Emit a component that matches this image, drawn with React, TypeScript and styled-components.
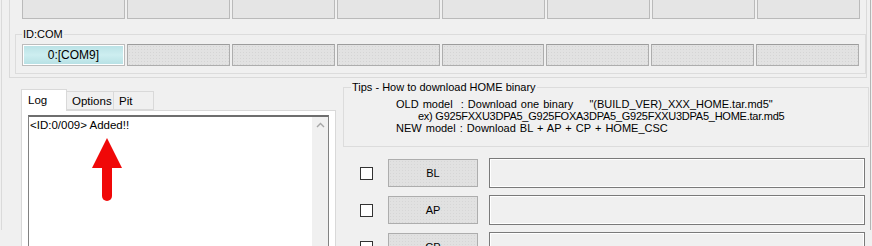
import styled, { createGlobalStyle } from 'styled-components';

const GlobalStyle = createGlobalStyle`
  html, body {
    margin: 0;
    padding: 0;
    background: #f0f0f0;
  }
  * {
    box-sizing: border-box;
  }
`;

const Screen = styled.div`
  position: relative;
  width: 872px;
  height: 246px;
  overflow: hidden;
  background: #f0f0f0;
  font-family: 'Liberation Sans', Arial, sans-serif;
  font-size: 11px;
  color: #000;
`;

const Frame = styled.div`
  margin-left: 1px;
  width: 870px;
  height: 246px;
  border-left: 1px solid #dadada;
  border-right: 1px solid #b4b4b4;
`;

const TopPanel = styled.div`
  margin: -16px 0 0 7px;
  width: 858px;
  border: 1px solid #dadada;
  padding-top: 11px;
`;

const ButtonRow = styled.div<{ $left: number }>`
  display: flex;
  gap: 2px;
  margin-left: ${(p) => p.$left}px;
`;

const SlotButton = styled.div`
  width: 103px;
  height: 23px;
  background: #e5e5e5;
  border: 1px solid #bababa;
`;

const Group = styled.fieldset`
  margin: 9px 0 3px 5px;
  padding: 0 6px 7px 6px;
  border: 1px solid #dcdcdc;
  min-width: 0;
`;

const Legend = styled.legend`
  padding: 0 1px;
  margin-left: 0;
  line-height: 13px;
  font-size: 11px;
`;

const ComButton = styled.div<{ $active?: boolean }>`
  width: 103px;
  height: 22px;
  display: flex;
  align-items: center;
  justify-content: center;
  font-size: 12px;
  border: 1px solid ${(p) => (p.$active ? '#bcbcbc' : '#adadad')};
  border-top-color: ${(p) => (p.$active ? '#bcbcbc' : '#9c9c9c')};
  background-color: ${(p) => (p.$active ? '#bce3e7' : '#e2e2e2')};
  background-image: ${(p) =>
    p.$active
      ? 'linear-gradient(#b9e1e5, #cdeef0 50%, #b6e0e4)'
      : 'radial-gradient(#d5d5d5 0.6px, transparent 0.8px)'};
  background-size: ${(p) => (p.$active ? 'auto' : '3px 3px')};
  box-shadow: ${(p) => (p.$active ? 'inset 0 0 0 1px #ffffff' : 'none')};
`;

const Bottom = styled.div`
  display: flex;
  align-items: flex-start;
  margin-top: 3px;
`;

const TabControl = styled.div`
  margin: 7px 0 0 19px;
  width: 315px;
`;

const TabStrip = styled.div`
  display: flex;
  align-items: flex-end;
  height: 22px;
  position: relative;
  z-index: 1;
`;

const Tab = styled.div<{ $selected?: boolean; $width: number }>`
  width: ${(p) => p.$width}px;
  height: ${(p) => (p.$selected ? 22 : 19)}px;
  margin-bottom: ${(p) => (p.$selected ? -1 : 0)}px;
  margin-left: -1px;
  &:first-child {
    margin-left: 0;
  }
  padding: ${(p) => (p.$selected ? '3px 0 0 6px' : '2px 0 0 5px')};
  background: ${(p) => (p.$selected ? '#ffffff' : '#f0f0f0')};
  border: 1px solid #d9d9d9;
  border-bottom: ${(p) => (p.$selected ? 'none' : '1px solid #d9d9d9')};
  font-size: 11.5px;
  line-height: 14px;
`;

const TabPage = styled.div`
  background: #ffffff;
  border: 1px solid #d9d9d9;
  height: 150px;
  padding: 4px 6px 0 6px;
`;

const LogBox = styled.div`
  display: flex;
  height: 140px;
  border: 1px solid #828282;
  border-top: 2px solid #6e6e6e;
  background: #ffffff;
`;

const LogText = styled.div`
  flex: 1;
  padding: 1px 0 0 1px;
  font-size: 11.5px;
  line-height: 15px;
`;

const ScrollBar = styled.div`
  width: 16px;
  background: #f0f0f0;
  display: flex;
  justify-content: center;
  padding-top: 5px;
`;

const RightColumn = styled.div`
  margin-left: 7px;
  width: 526px;
`;

const TipsGroup = styled.fieldset`
  margin: 0;
  padding: 0 7px 8px 7px;
  border: 1px solid #dcdcdc;
  height: 66px;
  min-width: 0;
`;

const TipLine = styled.div<{ $indent: number; $tight?: boolean }>`
  padding-left: ${(p) => p.$indent}px;
  line-height: 12px;
  white-space: pre;
  letter-spacing: ${(p) => (p.$tight ? '-0.25px' : '0')};
  word-spacing: ${(p) => (p.$tight ? '0' : '1px')};
`;

const TipsBody = styled.div`
  padding-top: 4px;
`;

const FileRows = styled.div`
  display: flex;
  flex-direction: column;
  gap: 7px;
  margin-top: 11px;
`;

const FileRow = styled.div`
  display: flex;
  align-items: center;
  height: 30px;
  padding-left: 17px;
`;

const CheckBox = styled.div`
  width: 13px;
  height: 13px;
  background: #ffffff;
  border: 1px solid #333333;
`;

const FileButton = styled.div`
  margin-left: 15px;
  width: 90px;
  height: 28px;
  display: flex;
  align-items: center;
  justify-content: center;
  border: 1px solid #adadad;
  background-color: #e1e1e1;
  background-image: radial-gradient(#d6d6d6 0.6px, transparent 0.8px);
  background-size: 3px 3px;
  font-size: 11px;
`;

const PathField = styled.div`
  margin-left: 11px;
  width: 376px;
  height: 30px;
  border: 1px solid #7a7a7a;
  box-shadow: inset 0 0 0 1px #ffffff;
  background: #f0f0f0;
`;

const ArrowMark = styled.svg`
  position: absolute;
  left: 90px;
  top: 136px;
`;

const topSlots = Array.from({ length: 8 });
const comSlots = ['0:[COM9]', '', '', '', '', '', '', ''];
const files = ['BL', 'AP', 'CP'];

export default function App() {
  return (
    <Screen>
      <GlobalStyle />
      <Frame>
        <TopPanel>
          <ButtonRow $left={12}>
            {topSlots.map((_, i) => (
              <SlotButton key={i} />
            ))}
          </ButtonRow>
          <Group>
            <Legend>ID:COM</Legend>
            <ButtonRow $left={0} style={{ marginTop: 3 }}>
              {comSlots.map((label, i) => (
                <ComButton key={i} $active={i === 0}>
                  {label}
                </ComButton>
              ))}
            </ButtonRow>
          </Group>
        </TopPanel>

        <Bottom>
          <TabControl>
            <TabStrip>
              <Tab $selected $width={46}>Log</Tab>
              <Tab $width={48}>Options</Tab>
              <Tab $width={41}>Pit</Tab>
            </TabStrip>
            <TabPage>
              <LogBox>
                <LogText>&lt;ID:0/009&gt; Added!!</LogText>
                <ScrollBar>
                  <svg width="9" height="6" viewBox="0 0 9 6">
                    <path d="M1 5 L4.5 1.5 L8 5" fill="none" stroke="#a6a6a6" strokeWidth="1.4" />
                  </svg>
                </ScrollBar>
              </LogBox>
            </TabPage>
          </TabControl>

          <RightColumn>
            <TipsGroup>
              <Legend>Tips - How to download HOME binary</Legend>
              <TipsBody>
                <TipLine $indent={45}>{'OLD model  : Download one binary    "(BUILD_VER)_XXX_HOME.tar.md5"'}</TipLine>
                <TipLine $indent={67} $tight>
                  ex) G925FXXU3DPA5_G925FOXA3DPA5_G925FXXU3DPA5_HOME.tar.md5
                </TipLine>
                <TipLine $indent={45}>NEW model : Download BL + AP + CP + HOME_CSC</TipLine>
              </TipsBody>
            </TipsGroup>
            <FileRows>
              {files.map((name) => (
                <FileRow key={name}>
                  <CheckBox />
                  <FileButton>{name}</FileButton>
                  <PathField />
                </FileRow>
              ))}
            </FileRows>
          </RightColumn>
        </Bottom>
      </Frame>

      <ArrowMark width="36" height="66" viewBox="0 0 36 66">
        <path d="M17 2 L32 32 L2 32 Z" fill="#f00808" />
        <path d="M12 30 L22 30 L22 60 A5 5 0 0 1 12 60 Z" fill="#f00808" />
      </ArrowMark>
    </Screen>
  );
}
